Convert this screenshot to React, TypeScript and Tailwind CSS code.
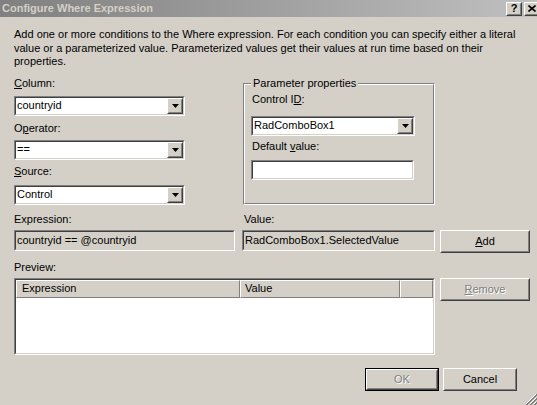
import type { ReactNode } from 'react';

function Sunken({ className = '', bg = 'bg-white', children }: { className?: string; bg?: string; children?: ReactNode }) {
  return (
    <div className={`border border-t-[#808080] border-l-[#808080] border-b-white border-r-white ${className}`}>
      <div className={`h-full border border-t-[#404040] border-l-[#404040] border-b-[#d4d0c8] border-r-[#d4d0c8] ${bg}`}>
        {children}
      </div>
    </div>
  );
}

function Raised({ className = '', children }: { className?: string; children?: ReactNode }) {
  return (
    <div className={`border border-t-white border-l-white border-b-[#404040] border-r-[#404040] ${className}`}>
      <div className="h-full border border-t-[#d4d0c8] border-l-[#d4d0c8] border-b-[#808080] border-r-[#808080] bg-[#d4d0c8] flex items-center justify-center">
        {children}
      </div>
    </div>
  );
}

function Combo({ value, className = '' }: { value: string; className?: string }) {
  return (
    <Sunken className={`h-[20px] ${className}`}>
      <div className="h-full flex items-center">
        <span className="flex-1 pl-[1px] leading-[13px] whitespace-nowrap overflow-hidden">{value}</span>
        <Raised className="w-[16px] h-[16px] shrink-0">
          <svg width="7" height="4" viewBox="0 0 7 4">
            <path d="M0 0h7L3.5 4z" fill="#000" />
          </svg>
        </Raised>
      </div>
    </Sunken>
  );
}

function Label({ children, className = '' }: { children: ReactNode; className?: string }) {
  return <div className={`h-[13px] leading-[13px] whitespace-nowrap ${className}`}>{children}</div>;
}

const disabledText = 'text-[#808080] [text-shadow:1px_1px_0_#ffffff]';

export default function App() {
  return (
    <div className="relative w-[537px] h-[405px] overflow-hidden bg-[#d4d0c8] font-['Liberation_Sans',Arial,sans-serif] text-[11px] text-black flex flex-col">
      {/* title bar */}
      <div className="h-[17px] shrink-0 flex items-center bg-linear-to-r from-[#808080] to-[#c0c0c0] pl-[2px]">
        <span className="font-bold text-[#d4d0c8] leading-[13px] whitespace-nowrap">Configure Where Expression</span>
        <div className="ml-auto mr-[-3px] flex gap-[2px]">
          <Raised className="w-[16px] h-[14px]">
            <span className="font-bold text-[11px] leading-none">?</span>
          </Raised>
          <Raised className="w-[16px] h-[14px]">
            <svg width="8" height="7" viewBox="0 0 8 7">
              <path d="M0.5 0.5l7 6M7.5 0.5l-7 6" stroke="#000" strokeWidth="1.6" />
            </svg>
          </Raised>
        </div>
      </div>

      <div className="flex flex-col pl-[14px]">
        <p className="mt-[11px] leading-[13.5px] whitespace-nowrap">
          Add one or more conditions to the Where expression. For each condition you can specify either a literal
          <br />
          value or a parameterized value. Parameterized values get their values at run time based on their
          <br />
          properties.
        </p>

        {/* column / operator / source + parameter properties */}
        <div className="mt-[8px] flex items-start">
          <div className="w-[171px] flex flex-col">
            <Label>
              <u>C</u>olumn:
            </Label>
            <Combo value="countryid" className="mt-[6px]" />
            <Label className="mt-[6px]">
              O<u>p</u>erator:
            </Label>
            <Combo value="==" className="mt-[5px]" />
            <Label className="mt-[5px]">
              <u>S</u>ource:
            </Label>
            <Combo value="Control" className="mt-[7px]" />
          </div>

          <div className="relative ml-[58px] mt-[6px] w-[192px] h-[122px] border border-t-[#808080] border-l-[#808080] border-b-white border-r-white">
            <div className="h-full border border-t-white border-l-white border-b-[#808080] border-r-[#808080] pl-[6px] flex flex-col">
              <Label className="mt-[8px] pl-[1px]">
                Control I<u>D</u>:
              </Label>
              <Combo value="RadComboBox1" className="mt-[10px] w-[164px]" />
              <Label className="mt-[4px] pl-[1px]">
                Default <u>v</u>alue:
              </Label>
              <Sunken className="mt-[7px] w-[163px] h-[20px]" />
            </div>
            <span className="absolute left-[7px] top-[-7px] px-[2px] bg-[#d4d0c8] h-[13px] leading-[13px] whitespace-nowrap">
              Parameter properties
            </span>
          </div>
        </div>

        {/* expression / value / add */}
        <div className="mt-[8px] flex items-start">
          <div className="w-[221px]">
            <Label>Expression:</Label>
            <Sunken className="mt-[4px] h-[21px]" bg="bg-[#d4d0c8]">
              <div className="h-full flex items-center pl-[1px] leading-[13px] whitespace-nowrap">countryid == @countryid</div>
            </Sunken>
          </div>
          <div className="ml-[7px] w-[193px]">
            <Label className="pl-[2px]">Value:</Label>
            <Sunken className="mt-[4px] h-[21px]" bg="bg-[#d4d0c8]">
              <div className="h-full flex items-center pl-[1px] leading-[13px] whitespace-nowrap">RadComboBox1.SelectedValue</div>
            </Sunken>
          </div>
          <Raised className="ml-[5px] mt-[17px] w-[90px] h-[23px]">
            <span>
              <u>A</u>dd
            </span>
          </Raised>
        </div>

        {/* preview */}
        <Label className="mt-[8px]">Preview:</Label>
        <div className="mt-[4px] flex items-start">
          <Sunken className="w-[421px] h-[77px]">
            <div className="flex h-[18px]">
              <div className="w-[224px] border border-t-white border-l-white border-b-[#808080] border-r-[#808080] bg-[#d4d0c8] pl-[5px] flex items-center leading-[13px]">
                Expression
              </div>
              <div className="w-[160px] border border-t-white border-l-white border-b-[#808080] border-r-[#808080] bg-[#d4d0c8] pl-[4px] flex items-center leading-[13px]">
                Value
              </div>
              <div className="flex-1 border border-t-white border-l-white border-b-[#808080] border-r-[#808080] bg-[#d4d0c8]" />
            </div>
          </Sunken>
          <Raised className="ml-[5px] w-[90px] h-[23px]">
            <span className={disabledText}>
              <u>R</u>emove
            </span>
          </Raised>
        </div>
      </div>

      {/* ok / cancel */}
      <div className="mt-[13px] flex justify-end gap-[4px] pr-[20px]">
        <div className="w-[74px] h-[23px] border border-black">
          <Raised className="h-full">
            <span className={disabledText}>OK</span>
          </Raised>
        </div>
        <Raised className="w-[74px] h-[23px]">
          <span>Cancel</span>
        </Raised>
      </div>

      {/* size grip */}
      <svg className="absolute right-0 bottom-0" width="12" height="12" viewBox="0 0 12 12">
        <path d="M11 1L1 11M11 5L5 11M11 9L9 11" stroke="#ffffff" strokeWidth="1" />
        <path d="M12 1L1 12M12 2L2 12M12 5L5 12M12 6L6 12M12 9L9 12M12 10L10 12" stroke="#808080" strokeWidth="1" />
      </svg>
    </div>
  );
}
